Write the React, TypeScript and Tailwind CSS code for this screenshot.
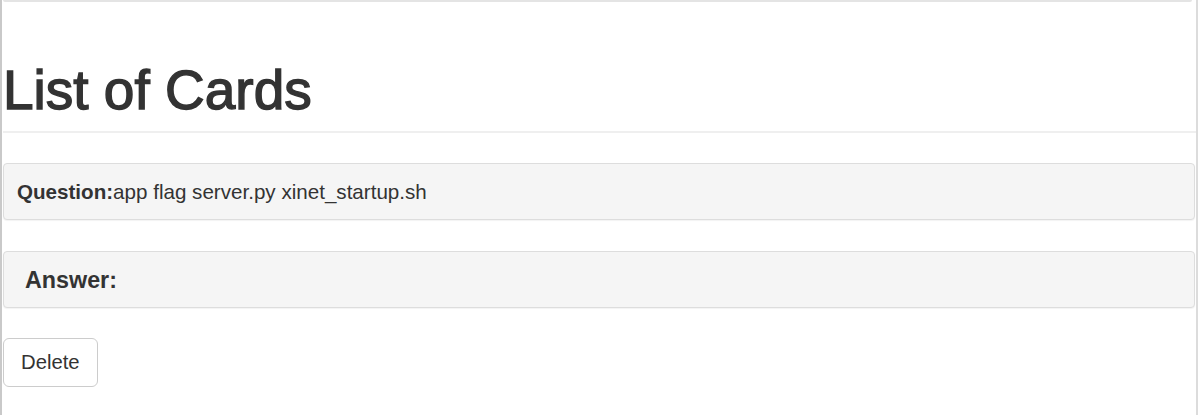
import React from "react";

export default function App() {
  return (
    <div
      className="w-[1200px] h-[415px] bg-white text-[#333] overflow-hidden"
      style={{ fontFamily: '"Liberation Sans", Arial, sans-serif' }}
    >
      <div className="w-[1198px] h-[415px] border-l-2 border-r-2 border-l-[#c9c9c9] border-r-[#dcdcdc] pl-[1px] pr-[1px]">
        <div className="h-[2px] mr-[3px] bg-[#e4e4e4] rounded-b-sm" />
        <h1 className="mt-[59px] text-[55px] leading-[59px] font-normal [-webkit-text-stroke:1.4px_#333] pb-[11px] border-b-2 border-[#efefef] mr-[-1px]">
          List of Cards
        </h1>
        <div className="mt-[30px] h-[57px] flex items-center border border-[#dddddd] bg-[#f5f5f5] rounded-[4px] shadow-[0_1px_1px_rgba(0,0,0,0.05)] pl-[13px] pt-[2px] text-[20.6px]">
          <span className="font-bold">Question:</span>
          <span>app flag server.py xinet_startup.sh</span>
        </div>
        <div className="mt-[31px] h-[57px] flex items-center border border-[#dddddd] bg-[#f5f5f5] rounded-[4px] shadow-[0_1px_1px_rgba(0,0,0,0.05)] pl-[21px] pt-[1px]">
          <span className="font-bold text-[23.3px]">Answer:</span>
        </div>
        <button className="mt-[30px] h-[49px] px-[17px] border border-[#cccccc] rounded-[6px] bg-white text-[20.3px] text-[#333] flex items-center">
          Delete
        </button>
      </div>
    </div>
  );
}
